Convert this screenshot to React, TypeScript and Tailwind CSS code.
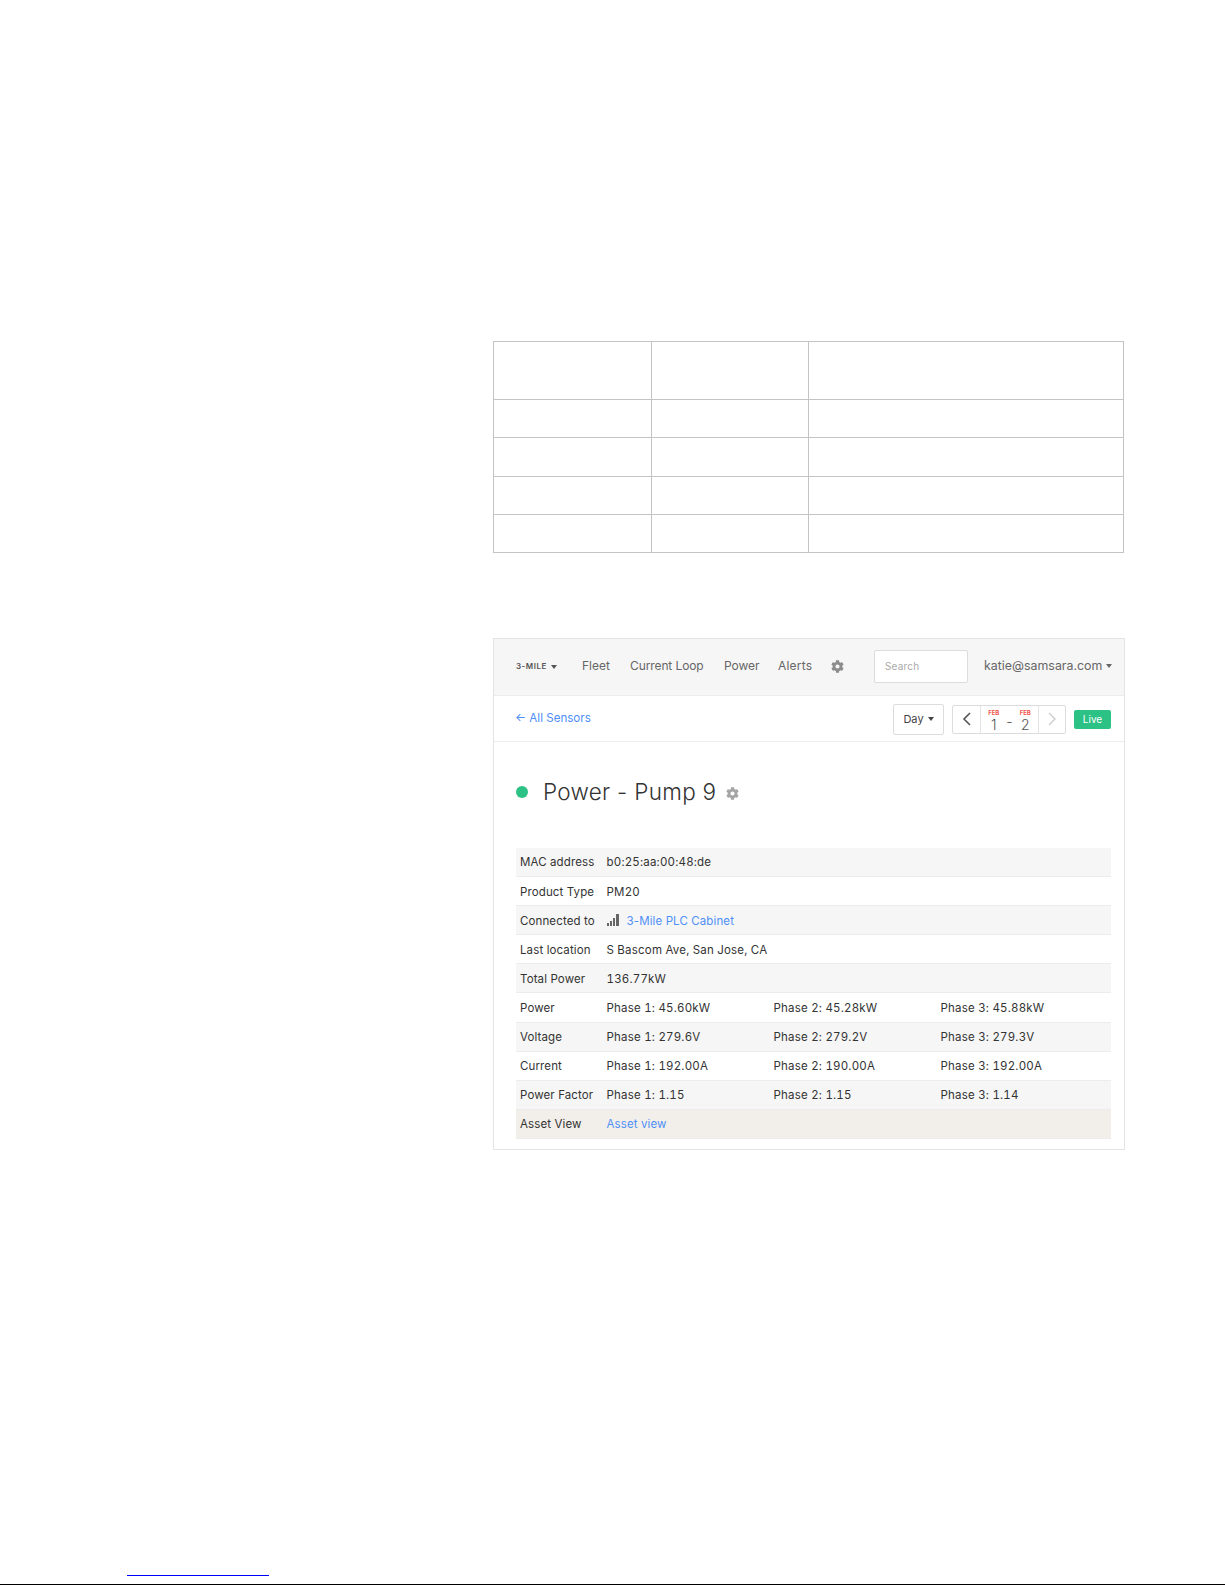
import { FaCog } from "react-icons/fa";

const font = "font-['Inter','Liberation_Sans',sans-serif]";

function Caret() {
  return <span className="inline-block ml-[4px] align-middle w-0 h-0 border-x-[3.5px] border-x-transparent border-t-[4px] border-t-current" />;
}

const rows = [
  { label: "MAC address", cells: ["b0:25:aa:00:48:de"], bg: "bg-[#f6f6f6]" },
  { label: "Product Type", cells: ["PM20"], bg: "bg-white" },
  { label: "Connected to", link: "3-Mile PLC Cabinet", bars: true, cells: [], bg: "bg-[#f6f6f6]" },
  { label: "Last location", cells: ["S Bascom Ave, San Jose, CA"], bg: "bg-white" },
  { label: "Total Power", cells: ["136.77kW"], bg: "bg-[#f6f6f6]" },
  { label: "Power", cells: ["Phase 1: 45.60kW", "Phase 2: 45.28kW", "Phase 3: 45.88kW"], bg: "bg-white" },
  { label: "Voltage", cells: ["Phase 1: 279.6V", "Phase 2: 279.2V", "Phase 3: 279.3V"], bg: "bg-[#f6f6f6]" },
  { label: "Current", cells: ["Phase 1: 192.00A", "Phase 2: 190.00A", "Phase 3: 192.00A"], bg: "bg-white" },
  { label: "Power Factor", cells: ["Phase 1: 1.15", "Phase 2: 1.15", "Phase 3: 1.14"], bg: "bg-[#f6f6f6]" },
  { label: "Asset View", link: "Asset view", cells: [], bg: "bg-[#f2efea]" },
];

function SignalBars() {
  return (
    <svg width="13" height="12" viewBox="0 0 13 12" className="mr-[7px] mb-[2px]">
      <rect x="0" y="9" width="2" height="3" fill="#666" />
      <rect x="3" y="7" width="2" height="5" fill="#666" />
      <rect x="6" y="4" width="2" height="8" fill="#666" />
      <rect x="9" y="0" width="3" height="12" fill="#666" />
    </svg>
  );
}

function BlankTable() {
  const trs = ["h-[58px]", "h-[38px]", "h-[39px]", "h-[38px]", "h-[38px]"];
  return (
    <table className="w-[631px] table-fixed border-collapse">
      <colgroup>
        <col className="w-[158px]" />
        <col className="w-[157px]" />
        <col />
      </colgroup>
      <tbody>
        {trs.map((h, i) => (
          <tr key={i} className={h}>
            <td className="border border-[#c4c4c4]" />
            <td className="border border-[#c4c4c4]" />
            <td className="border border-[#c4c4c4]" />
          </tr>
        ))}
      </tbody>
    </table>
  );
}

export default function App() {
  return (
    <div className={`${font} w-[1225px] h-[1585px] bg-white flex flex-col overflow-hidden`}>
      <div className="flex-1 pl-[493px] pt-[341px]">
        <BlankTable />

        <div className="mt-[85px] w-[632px] h-[512px] border border-[#e4e4e4] text-[#333]">
          <div className="h-[56px] pb-[2px] bg-[#f6f6f6] flex items-center pl-[22px] text-[12px] text-[#666]">
            <span className="text-[8px] font-semibold tracking-[0.5px] w-[66px] text-[#555]">3-MILE<Caret /></span>
            <span className="w-[48px]">Fleet</span>
            <span className="w-[94px] tracking-[-0.1px]">Current Loop</span>
            <span className="w-[54px] tracking-[-0.05px]">Power</span>
            <span className="w-[53px] tracking-[0.2px]">Alerts</span>
            <FaCog className="text-[#8c8c8c] w-[13px] h-[13px]" />
            <div className="ml-[30px] w-[94px] h-[33px] bg-white border border-[#dcdcdc] rounded-[2px] flex items-center pl-[10px] text-[10px] text-[#aaa] tracking-[0.2px]">Search</div>
            <span className="ml-[16px] text-[12.4px] whitespace-nowrap">katie@samsara.com<Caret /></span>
          </div>

          <div className="h-[47px] pt-[1px] bg-white border-y border-[#ececec] flex items-center pl-[22px] text-[11.6px]">
            <span className="text-[#4f8ff7] w-[377px] -ml-[1px] mr-[1px]">← All Sensors</span>
            <div className="w-[51px] h-[31px] border border-[#dcdcdc] rounded-[2px] flex items-center justify-center text-[11px] text-[#444]">Day<Caret /></div>
            <div className="ml-[8px] w-[114px] h-[29px] border border-[#dcdcdc] rounded-[2px] flex items-stretch text-[#555]">
              <div className="w-[27px] flex items-center justify-center">
                <svg width="10" height="14" viewBox="0 0 10 14" fill="none" stroke="#555" strokeWidth="1.6"><path d="M8 1 2 7l6 6" /></svg>
              </div>
              <div className="flex-1 border-x border-[#e4e4e4] flex items-end justify-center gap-[7px] text-[14px] leading-[17px] font-light">
                <div className="flex flex-col items-center">
                  <span className="text-[6px] leading-[7px] font-bold text-[#f4574f]">FEB</span>
                  <span>1</span>
                </div>
                <span className="mb-[3px]">-</span>
                <div className="flex flex-col items-center">
                  <span className="text-[6px] leading-[7px] font-bold text-[#f4574f]">FEB</span>
                  <span>2</span>
                </div>
              </div>
              <div className="w-[26px] flex items-center justify-center">
                <svg width="10" height="14" viewBox="0 0 10 14" fill="none" stroke="#ccc" strokeWidth="1.4"><path d="M2 1l6 6-6 6" /></svg>
              </div>
            </div>
            <div className="ml-[8px] w-[37px] h-[19px] bg-[#2cc185] rounded-[2px] flex items-center justify-center text-[10px] text-white">Live</div>
          </div>

          <div className="pl-[22px] pr-[13px]">
            <div className="h-[106px] flex items-center pb-[6px]">
              <span className="w-[12px] h-[12px] rounded-full bg-[#2cc185]" />
              <span className="ml-[15px] text-[22.5px] font-light tracking-[0.3px] text-[#333]">Power - Pump 9</span>
              <FaCog className="ml-[10px] mt-[3px] text-[#a5a5a5] w-[13px] h-[13px]" />
            </div>
            <div className="text-[11.5px] text-[#333] tracking-[0.12px]">
              {rows.map((r) => (
                <div key={r.label} className={`h-[29.1px] pt-[2px] flex items-center border-b border-[#ececec] pl-[4px] ${r.bg}`}>
                  <span className="w-[86.5px] whitespace-nowrap">{r.label}</span>
                  {r.bars && <SignalBars />}
                  {r.link && <span className="text-[#4f8ff7]">{r.link}</span>}
                  {r.cells.map((c) => (
                    <span key={c} className="w-[167px] whitespace-nowrap tabular-nums tracking-[0.2px]">{c}</span>
                  ))}
                </div>
              ))}
            </div>
          </div>
        </div>
      </div>

      <div className="pl-[127px] pb-[8px]">
        <div className="w-[142px] h-[1px] bg-[#0000ff]" />
      </div>
      <div className="h-[1px] bg-black" />
    </div>
  );
}
